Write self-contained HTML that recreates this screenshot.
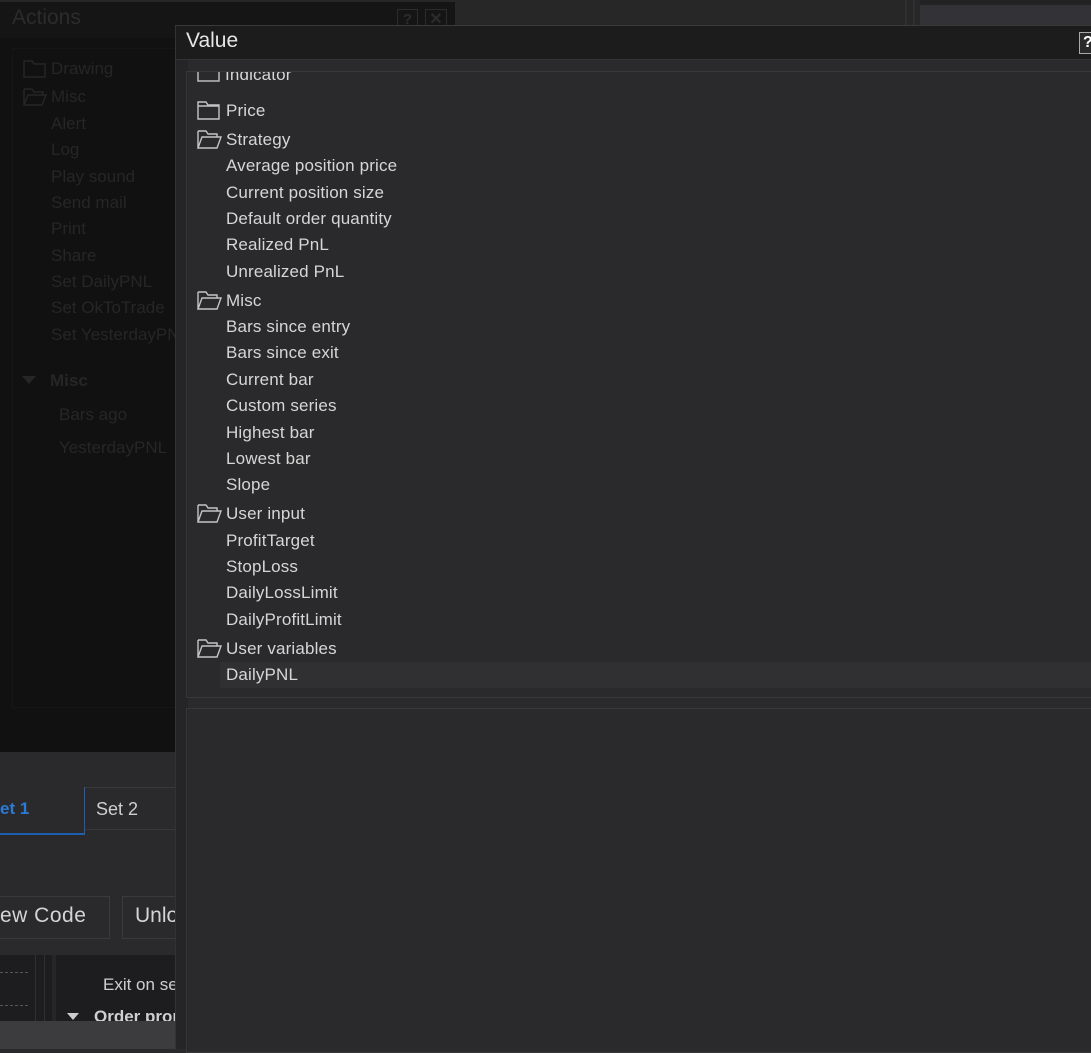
<!DOCTYPE html>
<html><head><meta charset="utf-8"><style>
*{margin:0;padding:0;box-sizing:border-box}
body{width:1091px;height:1049px;overflow:hidden;background:#2a2a2c;position:relative;font-family:"Liberation Sans",Arial,sans-serif}
.a{position:absolute;white-space:nowrap}
.t{position:absolute;white-space:nowrap;height:22px;line-height:22px;font-size:17px;color:#d6d6d6;letter-spacing:0.15px}
.l{position:absolute;white-space:nowrap;height:22px;line-height:22px;font-size:17px;color:#262626}
svg.f{position:absolute}
</style></head><body>
<div class="a" style="left:0;top:0;width:1091px;height:25px;background:#272727"></div>
<div class="a" style="left:905px;top:0;width:2px;height:25px;background:#2f2f2f"></div>
<div class="a" style="left:913px;top:0;width:2px;height:25px;background:#2f2f2f"></div>
<div class="a" style="left:920px;top:0;width:171px;height:25px;background:#333337;border-top:5px solid #222"></div>
<!-- Actions dialog -->
<div class="a" style="left:0;top:2px;width:455px;height:750px;background:#111"></div>
<div class="a" style="left:0;top:2px;width:455px;height:36px;background:#151515"></div>
<div class="a" style="left:12px;top:6px;font-size:21px;color:#2c2c2c">Actions</div>
<div class="a" style="left:397px;top:9px;width:21px;height:21px;border:1px solid #2c2c2c;color:#2c2c2c;font-size:15px;text-align:center;line-height:19px;font-weight:bold">?</div>
<div class="a" style="left:425px;top:9px;width:22px;height:21px;border:1px solid #2c2c2c;color:#2c2c2c;font-size:16px;text-align:center;line-height:19px;font-weight:bold">✕</div>
<div class="a" style="left:12px;top:48px;width:165px;height:660px;border:1px solid #161616"></div>
<svg class="f" style="left:23px;top:60px" width="24" height="18"><path d="M1 1h8l2 3h11v13H1z" fill="none" stroke="#262626" stroke-width="1.5"/></svg>
<div class="l" style="left:51px;top:58px">Drawing</div>
<svg class="f" style="left:23px;top:88px" width="24" height="18"><path d="M1 1h8l2 3h9v3M1 17V1M1 17l4-10h18l-4 10z" fill="none" stroke="#262626" stroke-width="1.5"/></svg>
<div class="l" style="left:51px;top:86px">Misc</div>
<div class="l" style="left:51px;top:113px">Alert</div>
<div class="l" style="left:51px;top:139px">Log</div>
<div class="l" style="left:51px;top:166px">Play sound</div>
<div class="l" style="left:51px;top:192px">Send mail</div>
<div class="l" style="left:51px;top:218px">Print</div>
<div class="l" style="left:51px;top:245px">Share</div>
<div class="l" style="left:51px;top:271px">Set DailyPNL</div>
<div class="l" style="left:51px;top:297px">Set OkToTrade</div>
<div class="l" style="left:51px;top:324px">Set YesterdayPNL</div>
<div class="a" style="left:22px;top:376px;width:0;height:0;border-left:7px solid transparent;border-right:7px solid transparent;border-top:8px solid #262626"></div>
<div class="l" style="left:50px;top:370px;font-weight:bold">Misc</div>
<div class="l" style="left:59px;top:404px">Bars ago</div>
<div class="l" style="left:59px;top:437px">YesterdayPNL</div>
<!-- bottom left area -->
<div class="a" style="left:0;top:787px;width:85px;height:48px;border-right:1px solid #1d5fae;border-bottom:2px solid #1d5fae"></div>
<div class="a" style="left:0;top:799px;font-size:17px;color:#2a7ad6;font-weight:bold">et 1</div>
<div class="a" style="left:85px;top:787px;width:95px;height:43px;border:1px solid #38383a;border-left:none"></div>
<div class="a" style="left:96px;top:799px;font-size:18px;color:#cfcfcf">Set 2</div>
<div class="a" style="left:-5px;top:896px;width:115px;height:43px;border:1px solid #3a3a3c"></div>
<div class="a" style="left:0;top:904px;font-size:21px;color:#d4d4d4;letter-spacing:0.5px">ew Code</div>
<div class="a" style="left:122px;top:896px;width:80px;height:43px;border:1px solid #3a3a3c"></div>
<div class="a" style="left:135px;top:904px;font-size:21px;color:#d4d4d4">Unlock</div>
<div class="a" style="left:0;top:955px;width:175px;height:66px;background:#1d1d1f"></div>
<div class="a" style="left:35px;top:955px;width:10px;height:66px;border-left:1px solid #303030;border-right:1px solid #303030"></div>
<div class="a" style="left:52px;top:955px;width:4px;height:66px;background:#262628"></div>
<div class="a" style="left:0;top:972px;width:28px;border-top:1px dashed #555"></div>
<div class="a" style="left:0;top:1005px;width:28px;border-top:1px dashed #555"></div>
<div class="a" style="left:103px;top:975px;font-size:17px;color:#cfcfcf">Exit on session close</div>
<div class="a" style="left:67px;top:1013px;width:0;height:0;border-left:6px solid transparent;border-right:6px solid transparent;border-top:7px solid #ccc"></div>
<div class="a" style="left:94px;top:1007px;font-size:17px;color:#cfcfcf;font-weight:bold">Order properties</div>
<div class="a" style="left:0;top:1021px;width:175px;height:28px;background:#3c3c3e"></div>
<!-- Value dialog -->
<div class="a" style="left:175px;top:25px;width:916px;height:1024px;background:#2a2a2c;border-top:1px solid #3a3a3a;border-left:1px solid #333"></div>
<div class="a" style="left:176px;top:26px;width:12px;height:1023px;background:#252527"></div>
<div class="a" style="left:176px;top:26px;width:915px;height:34px;background:#1c1c1c;border-bottom:1px solid #333"></div>
<div class="a" style="left:186px;top:29px;font-size:21px;color:#e6e6e6">Value</div>
<div class="a" style="left:1079px;top:32px;width:20px;height:22px;background:#2a2a2a;border:1px solid #aaa;color:#fff;font-size:16px;font-weight:bold;padding-left:3px;line-height:20px">?</div>
<div class="a" style="left:186px;top:71px;width:910px;height:627px;border:1px solid #38383a"></div>
<div class="a" style="left:220px;top:662px;width:871px;height:26px;background:#303032"></div>
<div class="a" style="left:186px;top:708px;width:910px;height:345px;border:1px solid #38383a"></div>
<!-- tree -->
<div class="a" style="left:187px;top:72px;width:900px;height:20px;overflow:hidden">
 <svg class="f" style="left:10px;top:-7px" width="24" height="18"><path d="M1 1v15h21V1" fill="none" stroke="#bbb" stroke-width="1.5"/></svg>
 <div class="t" style="left:38px;top:-8px">Indicator</div>
</div>
<svg class="f" style="left:197px;top:101px" width="24" height="19"><path d="M1 1h8l2 3h11v14H1zM1 5h21" fill="none" stroke="#c4c4c4" stroke-width="1.4"/></svg>
<div class="t" style="left:226px;top:100px">Price</div>
<svg class="f" style="left:197px;top:130px" width="25" height="19"><path d="M1 1h8l2 3h9v3M1 18V1M1 18l4-11h19l-4 11z" fill="none" stroke="#c4c4c4" stroke-width="1.4"/></svg>
<div class="t" style="left:226px;top:129px">Strategy</div>
<div class="t" style="left:226px;top:155px">Average position price</div>
<div class="t" style="left:226px;top:182px">Current position size</div>
<div class="t" style="left:226px;top:208px">Default order quantity</div>
<div class="t" style="left:226px;top:234px">Realized PnL</div>
<div class="t" style="left:226px;top:261px">Unrealized PnL</div>
<svg class="f" style="left:197px;top:291px" width="25" height="19"><path d="M1 1h8l2 3h9v3M1 18V1M1 18l4-11h19l-4 11z" fill="none" stroke="#c4c4c4" stroke-width="1.4"/></svg>
<div class="t" style="left:226px;top:290px">Misc</div>
<div class="t" style="left:226px;top:316px">Bars since entry</div>
<div class="t" style="left:226px;top:342px">Bars since exit</div>
<div class="t" style="left:226px;top:369px">Current bar</div>
<div class="t" style="left:226px;top:395px">Custom series</div>
<div class="t" style="left:226px;top:422px">Highest bar</div>
<div class="t" style="left:226px;top:448px">Lowest bar</div>
<div class="t" style="left:226px;top:474px">Slope</div>
<svg class="f" style="left:197px;top:504px" width="25" height="19"><path d="M1 1h8l2 3h9v3M1 18V1M1 18l4-11h19l-4 11z" fill="none" stroke="#c4c4c4" stroke-width="1.4"/></svg>
<div class="t" style="left:226px;top:503px">User input</div>
<div class="t" style="left:226px;top:530px">ProfitTarget</div>
<div class="t" style="left:226px;top:556px">StopLoss</div>
<div class="t" style="left:226px;top:582px">DailyLossLimit</div>
<div class="t" style="left:226px;top:609px">DailyProfitLimit</div>
<svg class="f" style="left:197px;top:639px" width="25" height="19"><path d="M1 1h8l2 3h9v3M1 18V1M1 18l4-11h19l-4 11z" fill="none" stroke="#c4c4c4" stroke-width="1.4"/></svg>
<div class="t" style="left:226px;top:638px">User variables</div>
<div class="t" style="left:226px;top:664px">DailyPNL</div>
</body></html>
